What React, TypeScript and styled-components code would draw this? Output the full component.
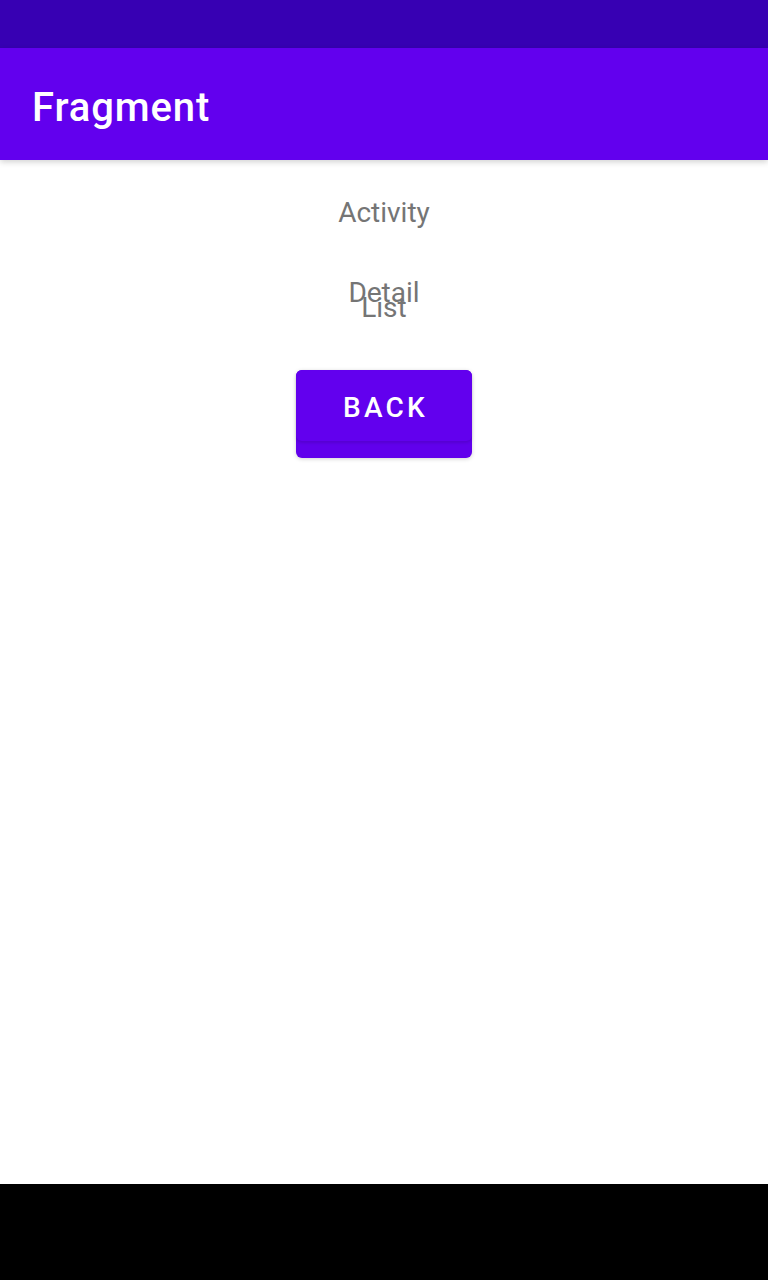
import React from "react";
import styled, { createGlobalStyle } from "styled-components";

const Global = createGlobalStyle`
  html, body { margin: 0; padding: 0; background: #fff; }
  body { font-family: Roboto, "Noto Sans", sans-serif; }
`;

const Screen = styled.div`
  width: 768px;
  height: 1280px;
  display: flex;
  flex-direction: column;
  overflow: hidden;
`;

const StatusBar = styled.div`
  height: 48px;
  background: #3700b3;
  flex: none;
`;

const AppBar = styled.header`
  height: 112px;
  flex: none;
  background: #6200ee;
  display: flex;
  align-items: center;
  padding: 6px 0 0 32px;
  box-sizing: border-box;
  box-shadow: 0 2px 6px rgba(0, 0, 0, 0.18);
  position: relative;
  z-index: 1;
`;

const Title = styled.h1`
  margin: 0;
  font-family: Roboto, sans-serif;
  font-weight: 500;
  font-size: 40px;
  color: #fff;
  letter-spacing: 0.9px;
`;

const Content = styled.main`
  flex: 1;
  display: flex;
  flex-direction: column;
  align-items: center;
  padding-top: 36px;
`;

const Label = styled.div<{ $offset?: number }>`
  font-family: Roboto, sans-serif;
  font-size: 28px;
  color: #757575;
  text-align: center;
  grid-area: 1 / 1;
  margin-top: ${(p) => p.$offset ?? 0}px;
`;

const Stack = styled.div`
  display: grid;
  justify-items: center;
  margin-top: 47px;
`;

const Button = styled.button`
  margin-top: 46px;
  width: 176px;
  height: 88px;
  border: none;
  padding: 0;
  border-radius: 6px;
  background: #6100ec;
  box-shadow: 0 1px 4px rgba(0, 0, 0, 0.18);
  display: flex;
  flex-direction: column;
  cursor: pointer;
`;

const Face = styled.span`
  height: 71px;
  box-sizing: border-box;
  border-radius: 6px;
  background: #6200ee;
  box-shadow: 0 2px 3px rgba(0, 0, 0, 0.12);
  display: flex;
  align-items: center;
  justify-content: center;
  font-family: Roboto, sans-serif;
  font-weight: 500;
  font-size: 28px;
  letter-spacing: 3.2px;
  color: #fff;
  padding: 4px 0 0 3px;
`;

const NavBar = styled.div`
  height: 96px;
  flex: none;
  background: #000;
`;

export default function App() {
  return (
    <>
      <Global />
      <Screen>
        <StatusBar />
        <AppBar>
          <Title>Fragment</Title>
        </AppBar>
        <Content>
          <Label>Activity</Label>
          <Stack>
            <Label>Detail</Label>
            <Label $offset={15}>List</Label>
          </Stack>
          <Button>
            <Face>BACK</Face>
          </Button>
        </Content>
        <NavBar />
      </Screen>
    </>
  );
}
